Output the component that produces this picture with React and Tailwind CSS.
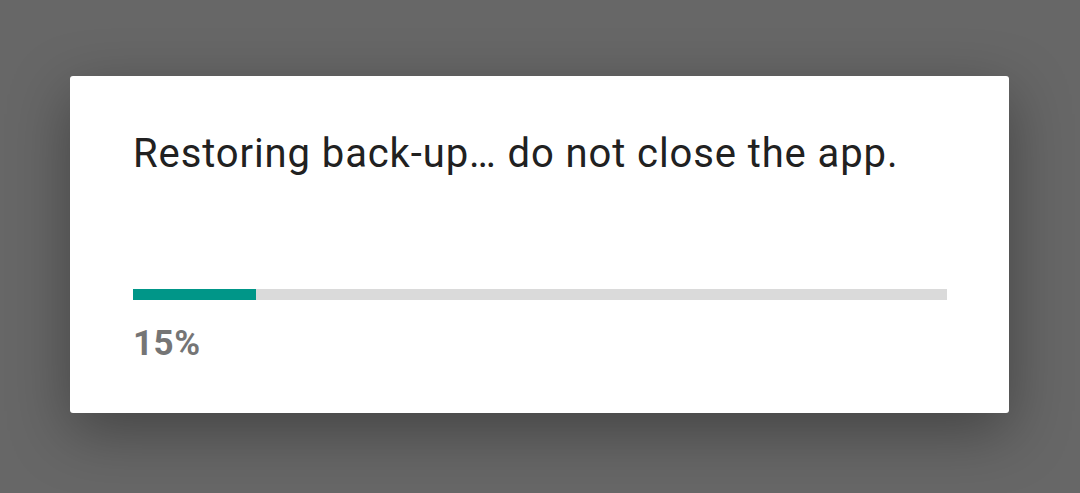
export default function App() {
  return (
    <div className="w-[1080px] h-[493px] bg-[#676767] pt-[76px] pl-[70px] overflow-hidden" style={{ fontFamily: "Roboto, 'Liberation Sans', sans-serif" }}>
      <div className="w-[939px] h-[337px] bg-white rounded-[3px] shadow-[0_18px_60px_rgba(0,0,0,0.35)] pt-[58px] pl-[63px] pr-[62px]">
        <div className="text-[40px] leading-[40px] text-[#212121] tracking-[0.9px]">Restoring back-up… do not close the app.</div>
        <div className="mt-[115px] h-[11px] bg-[#dadada] w-full">
          <div className="h-full w-[123px] bg-[#009688]" />
        </div>
        <div className="mt-[26px] text-[35px] leading-[35px] font-bold text-[#757575] tracking-[0.5px]">15%</div>
      </div>
    </div>
  );
}
